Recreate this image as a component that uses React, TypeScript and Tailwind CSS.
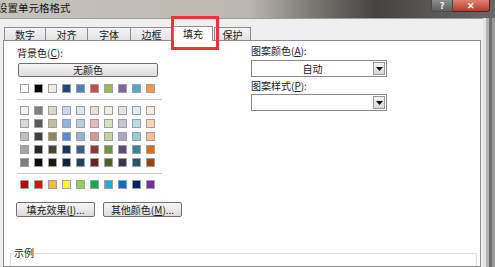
import React from "react";

const theme = ["#ffffff", "#000000", "#eeece1", "#1f497d", "#4f81bd", "#c0504d", "#9bbb59", "#8064a2", "#4bacc6", "#f79646"];

const tints = [
  ["#f2f2f2", "#7f7f7f", "#ddd9c3", "#c6d9f0", "#dbe5f1", "#f2dcdb", "#ebf1dd", "#e5e0ec", "#dbeef3", "#fdeada"],
  ["#d8d8d8", "#595959", "#c4bd97", "#8db3e2", "#b8cce4", "#e5b9b7", "#d7e3bc", "#ccc1d9", "#b7dde8", "#fbd5b5"],
  ["#bfbfbf", "#3f3f3f", "#938953", "#548dd4", "#95b3d7", "#d99694", "#c3d69b", "#b2a2c7", "#92cddc", "#fac08f"],
  ["#a5a5a5", "#262626", "#494429", "#17365d", "#366092", "#953734", "#76923c", "#5f497a", "#31859b", "#e36c09"],
  ["#7f7f7f", "#0c0c0c", "#1d1b10", "#0f243e", "#244061", "#632423", "#4f6128", "#3f3151", "#205867", "#974806"],
];

const standard = ["#c00000", "#ff0000", "#ffc000", "#ffff00", "#92d050", "#00b050", "#00b0f0", "#0070c0", "#002060", "#7030a0"];

const tabs = ["数字", "对齐", "字体", "边框", "填充", "保护"];
const tabWidths = ["w-[41px]", "w-[42px]", "w-[43px]", "w-[42px]", "w-[40px]", "w-[37px]"];

function SwatchRow({ colors }: { colors: string[] }) {
  return (
    <div className="flex gap-[5px]">
      {colors.map((c, i) => (
        <div
          key={i}
          className="w-[9px] h-[9px] border border-[#a0a0a0]"
          style={{ backgroundColor: c }}
        />
      ))}
    </div>
  );
}

function Dropdown({ value }: { value?: string }) {
  return (
    <div className="w-[136px] h-[17px] border border-[#8a8a8a] bg-white flex items-center">
      <div className="flex-1 text-center leading-none">{value}</div>
      <div className="w-[12px] h-[13px] mr-[1px] border border-[#9a9a9a] bg-gradient-to-b from-[#f4f4f4] to-[#d8d8d8] flex items-center justify-center">
        <svg width="7" height="4" viewBox="0 0 7 4">
          <path d="M0 0h7L3.5 4z" fill="#111" />
        </svg>
      </div>
    </div>
  );
}

export default function App() {
  return (
    <div
      className="relative w-[495px] h-[267px] overflow-hidden flex flex-col text-[10px] text-[#1a1a1a]"
      style={{ fontFamily: '"Noto Sans CJK SC", "Liberation Sans", sans-serif' }}
    >
      {/* title bar */}
      <div className="h-[18px] flex items-start justify-between bg-[linear-gradient(to_right,#c6c2bc_0%,#bcb8b1_50%,#77736e_64%,#444341_76%,#5b5956_88%,#6a6864_100%)]">
        <div className="pt-[3px] -ml-[3px] text-[10.5px] leading-none text-[#151515]">设置单元格格式</div>
        <div className="flex mr-[5px]">
          <div className="w-[22px] h-[12px] rounded-bl-[3px] border border-t-0 border-[#4a4a4a] bg-gradient-to-b from-[#8e8e8e] to-[#5e5e5e] flex items-center justify-center text-white text-[9px] font-bold leading-none">?</div>
          <div className="w-[37px] h-[12px] rounded-br-[3px] border border-t-0 border-l-0 border-[#4a2a24] bg-gradient-to-b from-[#e08070] to-[#b63a2c] flex items-center justify-center text-white text-[9px] font-bold leading-none">✕</div>
        </div>
      </div>

      <div className="flex-1 flex">
        {/* client */}
        <div className="flex-1 bg-[#efefef] border-t border-[#9c9c9c] pl-[3px] pr-[2px] flex flex-col">
          {/* tabs */}
          <div className="h-[21px] flex items-end pl-[1px]">
            {tabs.map((t, i) =>
              i === 4 ? (
                <div
                  key={t}
                  className={`${tabWidths[i]} h-[15px] -mb-px mx-[1px] bg-white border border-b-0 border-[#898c95] flex items-center justify-center leading-none z-10`}
                >
                  {t}
                </div>
              ) : (
                <div
                  key={t}
                  className={`${tabWidths[i]} h-[13px] pt-[1px] border border-b-0 border-r-0 last:border-r border-[#898c95] bg-gradient-to-b from-[#f4f4f4] to-[#e2e2e2] flex items-center justify-center leading-none`}
                >
                  {t}
                </div>
              )
            )}
          </div>

          {/* panel */}
          <div className="flex-1 bg-white border border-[#898c95] pl-[13px] pt-[7px] flex flex-col">
            <div className="flex">
              {/* left column */}
              <div className="w-[145px] flex flex-col">
                <div className="leading-none h-[10px]">
                  背景色(<u>C</u>):
                </div>
                <div className="mt-[5px] ml-[1px] w-[140px] h-[14px] rounded-[2px] border border-[#707070] bg-gradient-to-b from-[#f6f6f6] to-[#dcdcdc] flex items-center justify-center leading-none">
                  无颜色
                </div>
                <div className="mt-[7px] pl-[3px]">
                  <SwatchRow colors={theme} />
                </div>
                <div className="mt-[6px] h-px bg-[#c8c8c8]" />
                <div className="mt-[6px] pl-[3px] flex flex-col gap-[4px]">
                  {tints.map((row, i) => (
                    <SwatchRow key={i} colors={row} />
                  ))}
                </div>
                <div className="mt-[6px] h-px bg-[#c8c8c8]" />
                <div className="mt-[6px] pl-[3px]">
                  <SwatchRow colors={standard} />
                </div>
              </div>

              {/* right column */}
              <div className="ml-[89px] flex flex-col">
                <div className="leading-none h-[10px] -mt-[2px]">
                  图案颜色(<u>A</u>):
                </div>
                <div className="mt-[4px]">
                  <Dropdown value="自动" />
                </div>
                <div className="leading-none h-[10px] mt-[4px]">
                  图案样式(<u>P</u>):
                </div>
                <div className="mt-[3px]">
                  <Dropdown />
                </div>
              </div>
            </div>

            <div className="flex gap-[8px] mt-[13px] -ml-[1px]">
              <div className="w-[79px] h-[15px] rounded-[2px] border border-[#707070] bg-gradient-to-b from-[#f6f6f6] to-[#dcdcdc] flex items-center justify-center leading-none">
                填充效果(<u>I</u>)...
              </div>
              <div className="w-[79px] h-[15px] rounded-[2px] border border-[#707070] bg-gradient-to-b from-[#f6f6f6] to-[#dcdcdc] flex items-center justify-center leading-none">
                其他颜色(<u>M</u>)...
              </div>
            </div>

            {/* sample group */}
            <div className="mt-[36px] -ml-[7px] mr-[3px] flex-1 border-l border-t border-r border-[#d5dfe5] relative">
              <div className="absolute -top-[6px] left-[2px] bg-white px-[1px] leading-none">示例</div>
            </div>
          </div>
        </div>

        {/* right window frame */}
        <div className="w-[12px] flex">
          <div className="w-[3px] bg-[#e4e4e4]" />
          <div className="w-[3px] bg-[#b4b4b4]" />
          <div className="w-[3px] bg-[#6e6e6e]" />
          <div className="w-[3px] bg-[#9a9a9a]" />
        </div>
      </div>

      {/* red annotation box */}
      <div className="absolute left-[171px] top-[16px] w-[48px] h-[34px] border-[3px] border-[#e8343a]" />
    </div>
  );
}
